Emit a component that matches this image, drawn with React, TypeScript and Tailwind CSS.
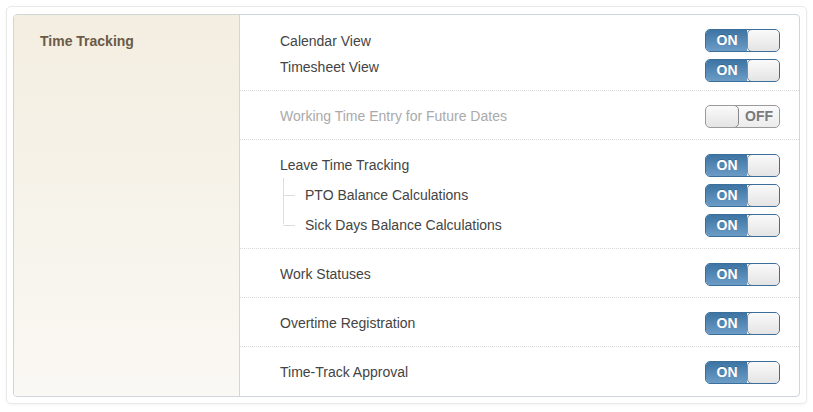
import React from "react";

function Toggle({ on = true }: { on?: boolean }) {
  if (on) {
    return (
      <div className="flex h-[23px] w-[75px] shrink-0 overflow-hidden rounded-[5px] border border-[#3a6e9b] bg-[#f1f1f1]">
        <div className="flex w-[41px] items-center justify-center bg-gradient-to-b from-[#3d74a3] to-[#6b9cc6] pl-px text-[14px] font-bold text-white [text-shadow:0_-1px_0_rgba(0,0,0,0.2)]">
          ON
        </div>
        <div className="-my-px -mr-px flex-1 rounded-[5px] border border-[#8a8a8a] bg-gradient-to-b from-[#fafafa] to-[#e4e4e4]" />
      </div>
    );
  }
  return (
    <div className="flex h-[23px] w-[75px] shrink-0 overflow-hidden rounded-[5px] border border-[#9a9a9a] bg-gradient-to-b from-[#fbfbfb] to-[#ececec]">
      <div className="-my-px -ml-px w-[34px] rounded-[5px] border border-[#8a8a8a] bg-gradient-to-b from-[#fafafa] to-[#e4e4e4]" />
      <div className="flex flex-1 items-center justify-center text-[14px] font-bold text-[#7a7a7a]">
        OFF
      </div>
    </div>
  );
}

const font = "font-['Liberation_Sans',Arial,sans-serif]";

export default function App() {
  return (
    <div className={`${font} h-[412px] w-[813px] bg-white pl-[6px] pt-[6px]`}>
      <div className="h-[398px] w-[801px] rounded-[5px] border border-[#e9e9e9] pb-[6px] pl-[6px] pr-[6px] pt-[7px] shadow-[0_1px_3px_rgba(0,0,0,0.05)]">
        <div className="flex h-[383px] w-[787px] overflow-hidden rounded-[4px] border border-[#cfd5db]">
          <div className="w-[226px] shrink-0 border-r border-[#d3d6d9] bg-gradient-to-b from-[#f3eee0] to-[#faf8f4] pl-[26px] pt-[16px]">
            <div className="text-[14px] font-bold leading-[20px] text-[#6b5a47]">Time Tracking</div>
          </div>
          <div className="flex-1 text-[14px] text-[#444]">
            {/* Group 1 */}
            <div className="flex h-[76px] justify-between border-b border-dotted border-[#d9d9d9] pl-[40px] pr-[19px]">
              <div className="pt-[13px]">
                <div className="leading-[26px]">Calendar View</div>
                <div className="leading-[26px]">Timesheet View</div>
              </div>
              <div className="flex flex-col gap-[7px] pt-[14px]">
                <Toggle />
                <Toggle />
              </div>
            </div>
            {/* Group 2 */}
            <div className="flex h-[49px] items-center justify-between border-b border-dotted border-[#d9d9d9] pl-[40px] pr-[19px] pt-[2px]">
              <div className="text-[#aaaaaa]">Working Time Entry for Future Dates</div>
              <Toggle on={false} />
            </div>
            {/* Group 3 */}
            <div className="h-[109px] border-b border-dotted border-[#d9d9d9] pl-[40px] pr-[19px] pt-[10px]">
              <div className="flex h-[30px] items-center justify-between">
                <div>Leave Time Tracking</div>
                <Toggle />
              </div>
              <div className="relative">
                <div className="absolute left-[3px] top-[-2px] h-[46px] w-px bg-[#dadde1]" />
                <div className="flex h-[30px] items-center justify-between">
                  <div className="flex items-center">
                    <div className="ml-[3px] mr-[10px] h-px w-[12px] bg-[#dadde1]" />
                    <div>PTO Balance Calculations</div>
                  </div>
                  <Toggle />
                </div>
                <div className="flex h-[30px] items-center justify-between">
                  <div className="flex items-center">
                    <div className="ml-[3px] mr-[10px] h-px w-[12px] bg-[#dadde1]" />
                    <div>Sick Days Balance Calculations</div>
                  </div>
                  <Toggle />
                </div>
              </div>
            </div>
            {/* Group 4 */}
            <div className="flex h-[49px] items-center justify-between border-b border-dotted border-[#d9d9d9] pl-[40px] pr-[19px] pt-[2px]">
              <div>Work Statuses</div>
              <Toggle />
            </div>
            {/* Group 5 */}
            <div className="flex h-[49px] items-center justify-between border-b border-dotted border-[#d9d9d9] pl-[40px] pr-[19px] pt-[2px]">
              <div>Overtime Registration</div>
              <Toggle />
            </div>
            {/* Group 6 */}
            <div className="flex h-[49px] items-center justify-between pl-[40px] pr-[19px] pt-[2px]">
              <div>Time-Track Approval</div>
              <Toggle />
            </div>
          </div>
        </div>
      </div>
    </div>
  );
}
